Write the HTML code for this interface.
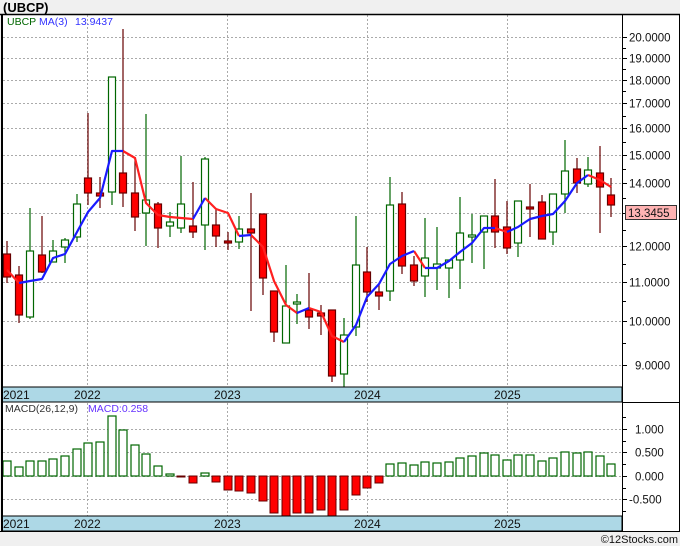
<!DOCTYPE html>
<html><head><meta charset="utf-8"><style>
html,body{margin:0;padding:0;background:#f0f0f0;width:680px;height:546px;overflow:hidden}
svg{display:block;font-family:"Liberation Sans",sans-serif}
</style></head><body>
<svg width="680" height="546" viewBox="0 0 680 546" xmlns="http://www.w3.org/2000/svg">
<rect x="0" y="0" width="680" height="546" fill="#f0f0f0"/>
<text x="3" y="12" font-size="13" font-weight="bold" fill="#000">(UBCP)</text>
<rect x="2" y="14" width="677" height="517" fill="#fff"/>
<!-- grid main -->
<g stroke="#aaa" stroke-width="1" stroke-dasharray="2,2" fill="none">
<line x1="3" x2="622" y1="37.5" y2="37.5"/><line x1="3" x2="622" y1="58.5" y2="58.5"/><line x1="3" x2="622" y1="80.5" y2="80.5"/><line x1="3" x2="622" y1="103.5" y2="103.5"/><line x1="3" x2="622" y1="128.5" y2="128.5"/><line x1="3" x2="622" y1="155.5" y2="155.5"/><line x1="3" x2="622" y1="183.5" y2="183.5"/><line x1="3" x2="622" y1="213.5" y2="213.5"/><line x1="3" x2="622" y1="246.5" y2="246.5"/><line x1="3" x2="622" y1="282.5" y2="282.5"/><line x1="3" x2="622" y1="321.5" y2="321.5"/><line x1="3" x2="622" y1="365.5" y2="365.5"/>
<line x1="87.5" x2="87.5" y1="15" y2="387"/><line x1="227.5" x2="227.5" y1="15" y2="387"/><line x1="367.5" x2="367.5" y1="15" y2="387"/><line x1="507.5" x2="507.5" y1="15" y2="387"/>
<line x1="3" x2="622" y1="429.5" y2="429.5"/><line x1="3" x2="622" y1="452.5" y2="452.5"/><line x1="3" x2="622" y1="476.5" y2="476.5"/><line x1="3" x2="622" y1="499.5" y2="499.5"/>
<line x1="87.5" x2="87.5" y1="403" y2="516"/><line x1="227.5" x2="227.5" y1="403" y2="516"/><line x1="367.5" x2="367.5" y1="403" y2="516"/><line x1="507.5" x2="507.5" y1="403" y2="516"/>
</g>
<!-- legend -->
<text x="7" y="25" font-size="10.5" fill="#006600">UBCP</text>
<text x="39" y="25" font-size="10.5" fill="#3333ff">MA(3)</text>
<text x="75" y="25" font-size="10.5" fill="#3333ff">13.9437</text>
<text x="5" y="412" font-size="10.5" fill="#333">MACD(26,12,9)</text>
<text x="88" y="412" font-size="10.5" fill="#6633ff">MACD:0.258</text>
<!-- candles -->
<g stroke-width="1.2">
<g stroke="#660000">
<line x1="7" x2="7" y1="241" y2="283"/><line x1="19" x2="19" y1="266" y2="323"/><line x1="42" x2="42" y1="216" y2="273"/><line x1="88" x2="88" y1="113" y2="205"/><line x1="100" x2="100" y1="177" y2="208"/><line x1="123" x2="123" y1="29" y2="207"/><line x1="135" x2="135" y1="157" y2="231"/><line x1="158" x2="158" y1="202" y2="248"/><line x1="193" x2="193" y1="182" y2="238"/><line x1="216" x2="216" y1="208" y2="247"/><line x1="228" x2="228" y1="232" y2="250"/><line x1="251" x2="251" y1="193" y2="311"/><line x1="263" x2="263" y1="214" y2="295"/><line x1="274" x2="274" y1="291" y2="342"/><line x1="309" x2="309" y1="273" y2="329"/><line x1="321" x2="321" y1="305" y2="335"/><line x1="332" x2="332" y1="310" y2="382"/><line x1="367" x2="367" y1="247" y2="302"/><line x1="379" x2="379" y1="285" y2="310"/><line x1="402" x2="402" y1="192" y2="274"/><line x1="414" x2="414" y1="256" y2="286"/><line x1="495" x2="495" y1="179" y2="248"/><line x1="507" x2="507" y1="201" y2="254"/><line x1="530" x2="530" y1="184" y2="237"/><line x1="542" x2="542" y1="195" y2="239"/><line x1="577" x2="577" y1="158" y2="193"/><line x1="600" x2="600" y1="146" y2="233"/><line x1="611" x2="611" y1="178" y2="217"/>
</g>
<g stroke="#006600">
<line x1="30" x2="30" y1="208" y2="319"/><line x1="53" x2="53" y1="240" y2="262"/><line x1="65" x2="65" y1="238" y2="263"/><line x1="77" x2="77" y1="194" y2="242"/><line x1="112" x2="112" y1="77" y2="205"/><line x1="146" x2="146" y1="114" y2="246"/><line x1="170" x2="170" y1="212" y2="237"/><line x1="181" x2="181" y1="156" y2="233"/><line x1="205" x2="205" y1="157" y2="250"/><line x1="239" x2="239" y1="216" y2="249"/><line x1="286" x2="286" y1="265" y2="343"/><line x1="297" x2="297" y1="294" y2="324"/><line x1="344" x2="344" y1="318" y2="387"/><line x1="356" x2="356" y1="216" y2="336"/><line x1="390" x2="390" y1="177" y2="301"/><line x1="425" x2="425" y1="218" y2="297"/><line x1="437" x2="437" y1="227" y2="290"/><line x1="449" x2="449" y1="260" y2="298"/><line x1="460" x2="460" y1="197" y2="289"/><line x1="472" x2="472" y1="214" y2="263"/><line x1="484" x2="484" y1="216" y2="269"/><line x1="518" x2="518" y1="201" y2="257"/><line x1="553" x2="553" y1="194" y2="245"/><line x1="565" x2="565" y1="140" y2="213"/><line x1="588" x2="588" y1="157" y2="187"/>
</g>
<g fill="#ff0000" stroke="#660000">
<rect x="3.5" y="254" width="7" height="23"/><rect x="15.5" y="275" width="7" height="40"/><rect x="38.5" y="255" width="7" height="17"/><rect x="84.5" y="178" width="7" height="15"/><rect x="96.5" y="193" width="7" height="3"/><rect x="119.5" y="173" width="7" height="20"/><rect x="131.5" y="193" width="7" height="24"/><rect x="154.5" y="204" width="7" height="24"/><rect x="189.5" y="226" width="7" height="6"/><rect x="212.5" y="225" width="7" height="11"/><rect x="224.5" y="241" width="7" height="2"/><rect x="247.5" y="229" width="7" height="4"/><rect x="259.5" y="214" width="7" height="64"/><rect x="270.5" y="291" width="7" height="41"/><rect x="305.5" y="310" width="7" height="7"/><rect x="317.5" y="313" width="7" height="3"/><rect x="328.5" y="310" width="7" height="66"/><rect x="363.5" y="272" width="7" height="20"/><rect x="375.5" y="292" width="7" height="4"/><rect x="398.5" y="204" width="7" height="62"/><rect x="410.5" y="265" width="7" height="16"/><rect x="491.5" y="216" width="7" height="16"/><rect x="503.5" y="227" width="7" height="21"/><rect x="526.5" y="207" width="7" height="2"/><rect x="538.5" y="202" width="7" height="37"/><rect x="573.5" y="169" width="7" height="14"/><rect x="596.5" y="173" width="7" height="14"/><rect x="607.5" y="195" width="7" height="10"/>
</g>
<g fill="#fff" stroke="#006600">
<rect x="26.5" y="251" width="7" height="66"/><rect x="49.5" y="251" width="7" height="11"/><rect x="61.5" y="240" width="7" height="7"/><rect x="73.5" y="204" width="7" height="33"/><rect x="108.5" y="77" width="7" height="115"/><rect x="142.5" y="200" width="7" height="13"/><rect x="166.5" y="222" width="7" height="4"/><rect x="177.5" y="204" width="7" height="24"/><rect x="201.5" y="159" width="7" height="66"/><rect x="235.5" y="229" width="7" height="13"/><rect x="282.5" y="306" width="7" height="37"/><rect x="293.5" y="302" width="7" height="2"/><rect x="340.5" y="335" width="7" height="39"/><rect x="352.5" y="265" width="7" height="62"/><rect x="386.5" y="205" width="7" height="86"/><rect x="421.5" y="258" width="7" height="18"/><rect x="433.5" y="264" width="7" height="4"/><rect x="445.5" y="260" width="7" height="8"/><rect x="456.5" y="233" width="7" height="27"/><rect x="468.5" y="235" width="7" height="2"/><rect x="480.5" y="216" width="7" height="16"/><rect x="514.5" y="201" width="7" height="42"/><rect x="549.5" y="194" width="7" height="38"/><rect x="561.5" y="171" width="7" height="23"/><rect x="584.5" y="170" width="7" height="14"/>
</g>
</g>
<!-- MA -->
<g fill="none" stroke-width="2.2" stroke-linejoin="round">
<g stroke="#ff2020">
<polyline points="7,270 19,283"/>
<polyline points="123,151 135,158 146,203 158,215 170,217 181,218 193,219"/>
<polyline points="205,198 216,209 228,213 239,236"/>
<polyline points="251,235 263,247 274,281 286,305 297,313"/>
<polyline points="309,308 321,312 332,336 344,342"/>
<polyline points="414,251 425,268"/>
<polyline points="495,228 507,232"/>
<polyline points="588,175 600,180 611,187"/>
</g>
<g stroke="#1a1aff">
<polyline points="19,283 30,281 42,279 53,258 65,254 77,232 88,212 100,198 112,151 123,151"/>
<polyline points="193,219 205,198"/>
<polyline points="239,236 251,235"/>
<polyline points="297,313 309,308"/>
<polyline points="344,342 356,325 367,297 379,284 390,264 402,256 414,251"/>
<polyline points="425,268 437,268 449,261 460,252 472,243 484,228 495,228"/>
<polyline points="507,232 518,227 530,219 542,216 553,214 565,201 577,183 588,175"/>
</g>
</g>
<!-- MACD bars -->
<g fill="#fff" stroke="#006600" stroke-width="1.2">
<rect x="3" y="461" width="8" height="15"/><rect x="15" y="467" width="8" height="9"/><rect x="26" y="461" width="8" height="15"/><rect x="38" y="461" width="8" height="15"/><rect x="49" y="459" width="8" height="17"/><rect x="61" y="456" width="8" height="20"/><rect x="73" y="449" width="8" height="27"/><rect x="84" y="443" width="8" height="33"/><rect x="96" y="442" width="8" height="34"/><rect x="108" y="416" width="8" height="60"/><rect x="119" y="430" width="8" height="46"/><rect x="131" y="445" width="8" height="31"/><rect x="142" y="454" width="8" height="22"/><rect x="154" y="466" width="8" height="10"/><rect x="166" y="474" width="8" height="2"/><rect x="201" y="473" width="8" height="3"/>
<rect x="386" y="464" width="8" height="12"/><rect x="398" y="463" width="8" height="13"/><rect x="410" y="465" width="8" height="11"/><rect x="421" y="462" width="8" height="14"/><rect x="433" y="463" width="8" height="13"/><rect x="445" y="462" width="8" height="14"/><rect x="456" y="458" width="8" height="18"/><rect x="468" y="456" width="8" height="20"/><rect x="480" y="453" width="8" height="23"/><rect x="491" y="455" width="8" height="21"/><rect x="503" y="460" width="8" height="16"/><rect x="514" y="455" width="8" height="21"/><rect x="526" y="455" width="8" height="21"/><rect x="538" y="461" width="8" height="15"/><rect x="549" y="458" width="8" height="18"/><rect x="561" y="452" width="8" height="24"/><rect x="573" y="453" width="8" height="23"/><rect x="584" y="452" width="8" height="24"/><rect x="596" y="456" width="8" height="20"/><rect x="607" y="464" width="8" height="12"/>
</g>
<g fill="#ff0000" stroke="#660000" stroke-width="1">
<rect x="177" y="476" width="8" height="1"/><rect x="189" y="476" width="8" height="7"/><rect x="212" y="476" width="8" height="6"/><rect x="224" y="476" width="8" height="14"/><rect x="235" y="476" width="8" height="15"/><rect x="247" y="476" width="8" height="17"/><rect x="259" y="476" width="8" height="25"/><rect x="270" y="476" width="8" height="37"/><rect x="282" y="476" width="8" height="40"/><rect x="293" y="476" width="8" height="37"/><rect x="305" y="476" width="8" height="37"/><rect x="317" y="476" width="8" height="34"/><rect x="328" y="476" width="8" height="40"/><rect x="340" y="476" width="8" height="34"/><rect x="352" y="476" width="8" height="19"/><rect x="363" y="476" width="8" height="12"/><rect x="375" y="476" width="8" height="7"/>
</g>
<!-- date bands -->
<rect x="2" y="387" width="620" height="15" fill="#add8e6" stroke="#000" stroke-width="1"/>
<rect x="2" y="516" width="620" height="15" fill="#add8e6" stroke="#000" stroke-width="1"/>
<g font-size="12" fill="#111">
<text x="3" y="399">2021</text><text x="74" y="399">2022</text><text x="214" y="399">2023</text><text x="354" y="399">2024</text><text x="494" y="399">2025</text>
<text x="3" y="528">2021</text><text x="74" y="528">2022</text><text x="214" y="528">2023</text><text x="354" y="528">2024</text><text x="494" y="528">2025</text>
</g>
<!-- borders -->
<g stroke="#000" fill="none">
<line x1="0" x2="680" y1="14.5" y2="14.5" stroke-width="1.5"/>
<line x1="2" x2="2" y1="14" y2="531" stroke-width="2"/>
<line x1="622.5" x2="622.5" y1="14" y2="531"/>
<line x1="679.5" x2="679.5" y1="14" y2="531"/>
<line x1="0" x2="680" y1="531.5" y2="531.5"/>
<line x1="622" x2="680" y1="402.5" y2="402.5"/>
</g>
<!-- ticks -->
<g stroke="#000">
<line x1="622" x2="627" y1="37.5" y2="37.5"/><line x1="622" x2="627" y1="58.5" y2="58.5"/><line x1="622" x2="627" y1="80.5" y2="80.5"/><line x1="622" x2="627" y1="103.5" y2="103.5"/><line x1="622" x2="627" y1="128.5" y2="128.5"/><line x1="622" x2="627" y1="155.5" y2="155.5"/><line x1="622" x2="627" y1="183.5" y2="183.5"/><line x1="622" x2="627" y1="213.5" y2="213.5"/><line x1="622" x2="627" y1="246.5" y2="246.5"/><line x1="622" x2="627" y1="282.5" y2="282.5"/><line x1="622" x2="627" y1="321.5" y2="321.5"/><line x1="622" x2="627" y1="365.5" y2="365.5"/>
<line x1="622" x2="626" y1="116.5" y2="116.5"/><line x1="622" x2="626" y1="142.5" y2="142.5"/><line x1="622" x2="626" y1="169.5" y2="169.5"/><line x1="622" x2="626" y1="198.5" y2="198.5"/><line x1="622" x2="626" y1="230.5" y2="230.5"/><line x1="622" x2="626" y1="264.5" y2="264.5"/><line x1="622" x2="626" y1="301.5" y2="301.5"/><line x1="622" x2="626" y1="343.5" y2="343.5"/><line x1="622" x2="626" y1="48.5" y2="48.5"/><line x1="622" x2="626" y1="69.5" y2="69.5"/><line x1="622" x2="626" y1="91.5" y2="91.5"/>
<line x1="622" x2="627" y1="429.5" y2="429.5"/><line x1="622" x2="627" y1="452.5" y2="452.5"/><line x1="622" x2="627" y1="476.5" y2="476.5"/><line x1="622" x2="627" y1="499.5" y2="499.5"/><line x1="622" x2="626" y1="417.5" y2="417.5"/><line x1="622" x2="626" y1="441.5" y2="441.5"/><line x1="622" x2="626" y1="464.5" y2="464.5"/><line x1="622" x2="626" y1="488.5" y2="488.5"/><line x1="622" x2="626" y1="511.5" y2="511.5"/>
</g>
<g font-size="11.5" fill="#111">
<text x="629" y="41.5">20.0000</text><text x="629" y="62.5">19.0000</text><text x="629" y="84.5">18.0000</text><text x="629" y="107.5">17.0000</text><text x="629" y="132.5">16.0000</text><text x="629" y="159.5">15.0000</text><text x="629" y="187.5">14.0000</text><text x="629" y="250.5">12.0000</text><text x="629" y="286.5">11.0000</text><text x="629" y="325.5">10.0000</text><text x="635" y="369.5">9.0000</text>
<text x="635" y="433.5">1.000</text><text x="635" y="456.5">0.500</text><text x="635" y="480.5">0.000</text><text x="629" y="503.5">-0.500</text>
</g>
<rect x="625.5" y="205.5" width="51" height="14" fill="#ffb3b3" stroke="#333"/>
<text x="628" y="217" font-size="11.5" fill="#111">13.3455</text>
<text x="678" y="543" font-size="11" fill="#111" text-anchor="end">©12Stocks.com</text>
</svg>
</body></html>
